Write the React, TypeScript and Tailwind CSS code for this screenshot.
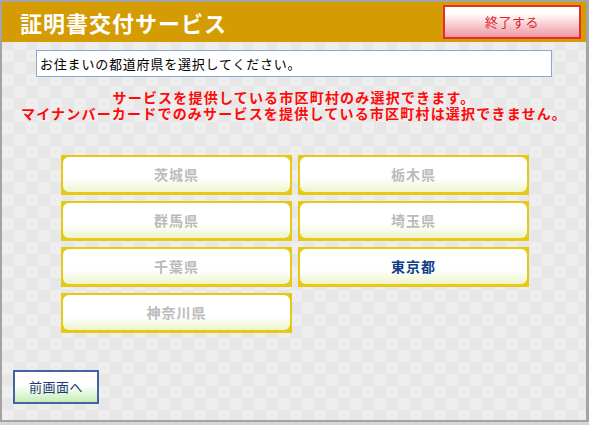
const prefs = [
  { name: '茨城県', enabled: false },
  { name: '栃木県', enabled: false },
  { name: '群馬県', enabled: false },
  { name: '埼玉県', enabled: false },
  { name: '千葉県', enabled: false },
  { name: '東京都', enabled: true },
  { name: '神奈川県', enabled: false },
];

const font = { fontFamily: '"Noto Sans CJK JP", "Noto Sans", sans-serif' };

const PrefButton = ({ name, enabled }: { name: string; enabled: boolean }) => (
  <div className="h-[40px] bg-[#e6c915] p-[2px] pb-[3px]">
    <button
      disabled={!enabled}
      className={`w-full h-full rounded-[6px] bg-gradient-to-b from-white from-60% to-[#eef4cc] text-[14px] font-bold tracking-[1px] ${
        enabled ? 'text-[#123f85]' : 'text-[#bbbbbb]'
      }`}
    >
      {name}
    </button>
  </div>
);

export default function App() {
  return (
    <div className="w-[589px] h-[425px] bg-[#d6d6d6]" style={font}>
      <div className="h-[422px] border-t-2 border-l-2 border-r-[3px] border-b-2 border-[#a4a4a4] bg-[repeating-conic-gradient(#e7e7e7_0%_25%,#eeeeee_0%_50%)] bg-[length:24px_24px] flex flex-col">
        {/* header */}
        <div className="h-[40px] bg-[#d49c02] flex items-center justify-between pl-[18px] pr-[5px]">
          <h1 className="text-white text-[22px] font-bold tracking-[1px] leading-none">
            証明書交付サービス
          </h1>
          <button className="w-[138px] h-[34px] border-2 border-[#ec2a2a] bg-gradient-to-b from-white from-20% to-[#eb98a2] text-[#d8262e] text-[13px] tracking-[0.5px]">
            終了する
          </button>
        </div>

        {/* prompt */}
        <div className="ml-[34px] mt-[8px] w-[516px] h-[27px] bg-white border border-[#8aa6d4] flex items-center pl-[3px] text-[13px] tracking-[0.8px] text-black">
          お住まいの都道府県を選択してください。
        </div>

        <div className="mt-[12px] text-center text-[#ff0a0a] text-[14px] font-bold leading-[16px] tracking-[1.2px]">
          <p>サービスを提供している市区町村のみ選択できます。</p>
          <p>マイナンバーカードでのみサービスを提供している市区町村は選択できません。</p>
        </div>

        {/* prefectures */}
        <div className="ml-[59px] mt-[34px] w-[468px] grid grid-cols-2 gap-[6px]">
          {prefs.map((p) => (
            <PrefButton key={p.name} name={p.name} enabled={p.enabled} />
          ))}
        </div>

        <div className="ml-[11px] mt-[37px]">
          <button className="w-[86px] h-[34px] border-2 border-[#4462a4] bg-gradient-to-b from-white from-45% to-[#c4eeb4] text-[#1c3a74] text-[13px] tracking-[0.5px]">
            前画面へ
          </button>
        </div>
      </div>
    </div>
  );
}
